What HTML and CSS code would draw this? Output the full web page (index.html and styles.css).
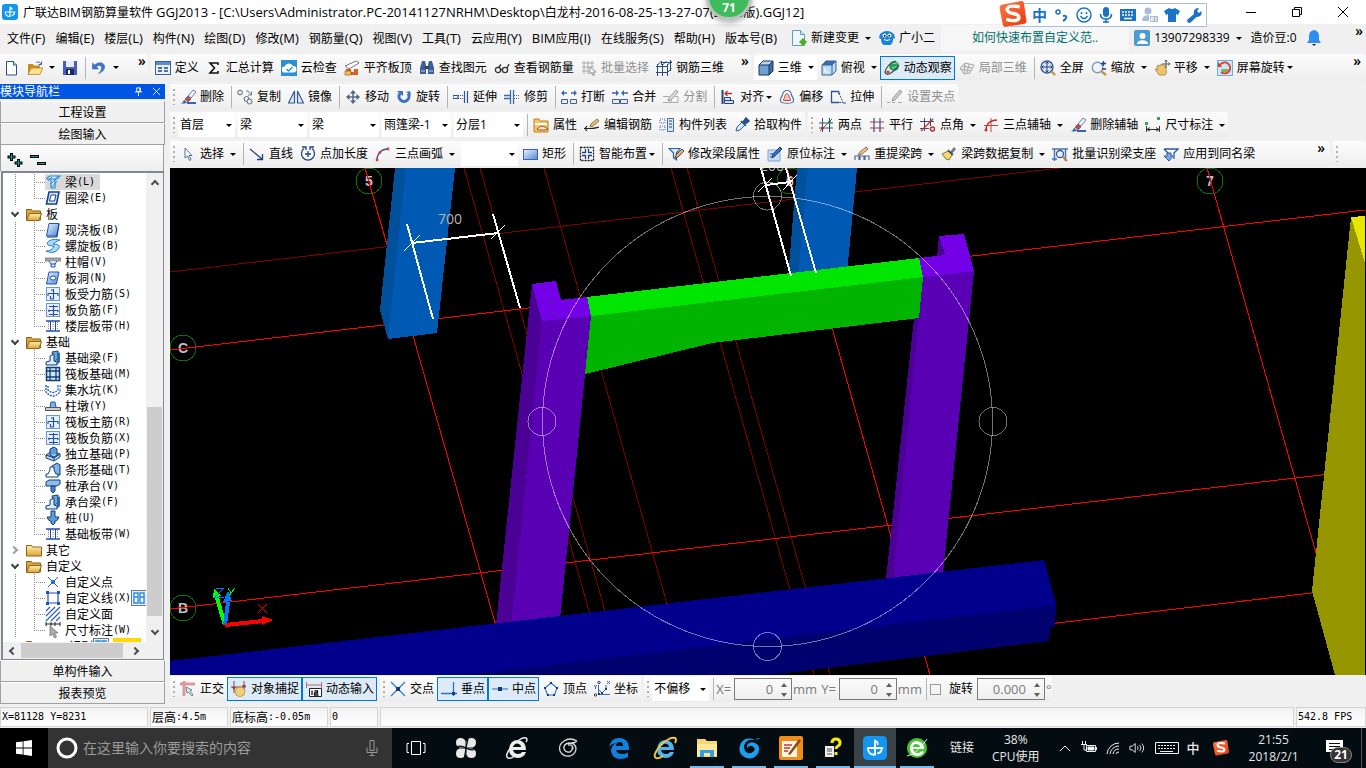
FILE: index.html
```html
<!DOCTYPE html>
<html lang="zh-CN">
<head>
<meta charset="utf-8">
<title>广联达BIM钢筋算量软件 GGJ2013</title>
<link rel="stylesheet" href="styles.css">
</head>
<body>
<svg class="defs" aria-hidden="true">
<defs>
<linearGradient id="gb" x1="0" y1="0" x2="1" y2="1"><stop offset="0" stop-color="#eaf4ff"/><stop offset="1" stop-color="#4f86d8"/></linearGradient>
<linearGradient id="gf" x1="0" y1="0" x2="0" y2="1"><stop offset="0" stop-color="#fff0b0"/><stop offset="1" stop-color="#dfa530"/></linearGradient>
<linearGradient id="gs" x1="0" y1="0" x2="1" y2="1"><stop offset="0" stop-color="#ff7a45"/><stop offset="1" stop-color="#e8380d"/></linearGradient>
</defs>
<symbol id="app" viewBox="0 0 16 16"><rect width="16" height="16" rx="3" fill="#1296f0"/><path d="M8 3v9.500M3.500 8H13M3.300 8q0 4.500 4.700 4.500M12.500 8q0 3-2.500 3.500M8 3.500q2 0 1.800 2" fill="none" stroke="#fff" stroke-width="1.200" stroke-linecap="round"/></symbol>
<symbol id="new" viewBox="0 0 16 16"><path d="M2.500 1.500h7l3 3.500v10h-10z" fill="#fff" stroke="#2f4f86"/><path d="M9.500 1.500V5h3" fill="#dce8f8" stroke="#2f4f86"/></symbol>
<symbol id="open" viewBox="0 0 16 16"><path d="M1 4h5l1 1.500h6V14H1z" fill="#c98e22"/><path d="M4 8h12l-3 6.500H1z" fill="#ffe08a" stroke="#a87820" stroke-width=".7"/><path d="M9 3c2-2 4-1 5 1M14.500 1.500v3h-3" fill="none" stroke="#3a62a8"/></symbol>
<symbol id="save" viewBox="0 0 16 16"><path d="M1 1h14v14H1z" fill="#4a5cc0"/><path d="M4 1h8v6H4z" fill="#e6ecff"/><path d="M4 9h8v6H4z" fill="#20285c"/><path d="M6 10h2v4H6z" fill="#fff"/></symbol>
<symbol id="undo" viewBox="0 0 16 16"><path d="M1.500 3v6h6L5.300 6.800C9 4 11 6 10.500 8.500c-.3 2-1.500 3.500-3 5C12 12 14 9 13.500 6 12.500 2 7.500 1.500 3.700 5z" fill="#3874d8" stroke="#2a57a8" stroke-width=".5"/></symbol>
<symbol id="define" viewBox="0 0 16 16"><rect x=".5" y="1.500" width="15" height="13" fill="#e8f0fc" stroke="#3a5f9f"/><path d="M1 2h14v3H1z" fill="#5f8bd0"/><path d="M3 8h4M3 11h4M9 8h4M9 11h4" stroke="#26437c" stroke-width="1.500"/></symbol>
<symbol id="sigma" viewBox="0 0 16 16"><path d="M12 5V3H4l4.500 5L4 13h8v-2" fill="none" stroke="#111" stroke-width="1.600"/></symbol>
<symbol id="cloud" viewBox="0 0 16 16"><rect width="16" height="16" fill="#2b8fd3"/><path d="M4 12.500a3 3 0 0 1-.3-6A4.500 4.500 0 0 1 12 6a3.200 3.200 0 0 1 .5 6.500z" fill="#fff"/><path d="m5.500 9 2 2 4-4" fill="none" stroke="#2b8fd3" stroke-width="1.400"/></symbol>
<symbol id="level" viewBox="0 0 16 16"><path d="M1 6 12 1l3 2L5 9z" fill="#fff" stroke="#777"/><path d="M2 9h5v3h3v-3h4v6H2z" fill="#d9622b"/><path d="M1 11h6v4H1z" fill="#f3c14c" stroke="#8a4a1a" stroke-width=".6"/></symbol>
<symbol id="find" viewBox="0 0 16 16"><path d="M3 1h3l1 4v9H1V8zM10 1h3l2 7v6H9V5z" fill="#3c5f9c"/><path d="M6 6h4v3H6z" fill="#274272"/><path d="M2 11h4M10 11h4" stroke="#bcd0f0"/></symbol>
<symbol id="glasses" viewBox="0 0 16 16"><g fill="none" stroke="#333" stroke-width="1.300"><circle cx="4" cy="10" r="2.600"/><circle cx="11" cy="10" r="2.600"/><path d="M6.600 9.500h2M4.500 7.500 7 4.500M13 8l2-4"/></g></symbol>
<symbol id="batch" viewBox="0 0 16 16"><path d="M1 3h12M1 7h12M1 11h7M3 1v13M7 1v13M11 1v6" stroke="#a8a8a8"/><path d="m9 7 6 5-3 .3L13.500 15 12 15.500l-1.200-3L9 14z" fill="#fff" stroke="#909090"/></symbol>
<symbol id="bars3d" viewBox="0 0 16 16"><path d="M1.500 4v12M6.500 4v12M11.500 4v12M0 6.500h12M0 12.500h12M14.500 0v11M1.500 5l4-4M6.500 5l4-4M11.500 5l4-4M11.500 12.500l4-4M5 2.500h11M5.500 1v4" fill="none" stroke="#2d4a80"/></symbol>
<symbol id="cube" viewBox="0 0 16 16"><path d="M1 5 5 1h10L11 5z" fill="#b9d5ee"/><path d="M1 5h10v10H1z" fill="#6fa0cf"/><path d="m11 5 4-4v10l-4 4z" fill="#3c6ca4"/><path d="M1 5h10v10H1zM1 5l4-4h10L11 5M15 1v10l-4 4" fill="none" stroke="#17375e"/></symbol>
<symbol id="top" viewBox="0 0 16 16"><path d="M1 5 5 1h10L11 5z" fill="#3b6ea8"/><path d="M1 5h10v10H1zm10 0 4-4v10l-4 4z" fill="#bcdcf4"/><path d="M1 5h10v10H1zM1 5l4-4h10L11 5M15 1v10l-4 4" fill="none" stroke="#3a6494"/><path d="M4 8v4h4" stroke="#fff" fill="none"/></symbol>
<symbol id="orbit" viewBox="0 0 16 16"><circle cx="10" cy="6" r="5" fill="#28a05c"/><path d="M7 4c2-2 4 0 6-1M8 8c2 0 3-2 5-1" stroke="#a5e8bd" fill="none"/><path d="M12 1Q3 4 1 12q1 4 6 1 5-3 8-8" fill="none" stroke="#444" stroke-width="1.200"/><circle cx="4" cy="12" r="1.600" fill="#c23a2a"/></symbol>
<symbol id="local3d" viewBox="0 0 16 16"><path d="m1 8 5-5 9 2-4 8-6 1zM6 3l-1 11M10 4 8 13M3 6l10 2M1 9l11 2" fill="#eee" stroke="#aaa"/></symbol>
<symbol id="full" viewBox="0 0 16 16"><circle cx="7" cy="7" r="6" fill="#dcebff" stroke="#3a5690" stroke-width="1.400"/><path d="M7 2v10M2 7h10M5.500 3.500 7 2l1.500 1.500M5.500 10.500 7 12l1.500-1.500M3.500 5.500 2 7l1.500 1.500M10.500 5.500 12 7l-1.500 1.500" fill="none" stroke="#22407c"/><path d="m11.500 11.500 3.500 3.500" stroke="#c89040" stroke-width="2.400"/></symbol>
<symbol id="zoom" viewBox="0 0 16 16"><circle cx="6.500" cy="7.500" r="5.200" fill="#eef5ff" stroke="#8a96ac" stroke-width="1.400"/><path d="M10.500 11.500 15 15" stroke="#c89040" stroke-width="2.400"/><path d="M12.500 1v5M10 3.500h5M11 9h4" stroke="#22407c" stroke-width="1.300"/></symbol>
<symbol id="pan" viewBox="0 0 16 16"><path d="M1 9l2 1V6l2-1 1 1 1-2 2 1 1 1 2 0v5l1 1-2 3H5z" fill="#edc46a" stroke="#9a7434" stroke-width=".7"/><path d="M12 0v8M8 4h8M10.700 1.500 12 0l1.300 1.500M14.500 2.700 16 4l-1.500 1.300" fill="none" stroke="#555"/></symbol>
<symbol id="spinview" viewBox="0 0 16 16"><rect x=".5" y=".5" width="15" height="15" fill="#c8e8fa" stroke="#6ab0d8"/><path d="M4 9h8l-2 3H5z" fill="#7ab648"/><path d="M3 5a5.500 5.500 0 1 1 1 7" fill="none" stroke="#e03a2f" stroke-width="1.800"/><path d="M1 2v5h4z" fill="#e03a2f"/></symbol>
<symbol id="erase" viewBox="0 0 16 16"><path d="M8 7l5-6 3 2-5 6z" fill="#f2f5fa" stroke="#44618f" stroke-width=".8"/><path d="m5 10 3-3 3 3-3 3z" fill="#c84a48" stroke="#3a4a78" stroke-width=".6"/><path d="M0 14.500q3 0 4-4l3 3-2 1z" fill="#3a64a8"/><path d="M7 14h9" stroke="#3a64a8" stroke-width="2"/></symbol>
<symbol id="copy" viewBox="0 0 16 16"><g fill="#eef1f5" stroke="#5b6470"><circle cx="3" cy="3.500" r="2.400"/><circle cx="9.500" cy="10" r="2.500"/><circle cx="12.500" cy="12.500" r="2.500"/></g><path d="M9 2h2l3 3.500M14.500 2.500V6H11" fill="none" stroke="#6b7a90"/></symbol>
<symbol id="mirror" viewBox="0 0 16 16"><path d="M6.500 2v12h-6zM9.500 2v12h6z" fill="#dfeafa" stroke="#34578f" stroke-width="1.200"/></symbol>
<symbol id="move" viewBox="0 0 16 16"><path d="M8 2v12M2 8h12" stroke="#5a6c86" stroke-width="1.600"/><path d="M8 1 5 4.500h6zM8 15l-3-3.500h6zM1 8l3.500-3v6zM15 8l-3.500-3v6z" fill="#4a6288"/></symbol>
<symbol id="rotate" viewBox="0 0 16 16"><path d="M4 4.500a5 5 0 1 0 8 0" fill="none" stroke="#3b6fc4" stroke-width="3"/><path d="M1 2h6v5zM10 3l4-1 1 4z" fill="#3b6fc4"/></symbol>
<symbol id="extend" viewBox="0 0 16 16"><path d="M14.500 2v12M11.500 2v12M0 6.500h5v3H0z" fill="none" stroke="#2d5792" stroke-width="1.200"/><path d="M5 6.500h6M5 9.500h6" stroke="#2d5792" stroke-dasharray="1 1"/></symbol>
<symbol id="trim" viewBox="0 0 16 16"><path d="M6.500 1v14M9.500 1v14M0 6.500h6M0 9.500h6" fill="none" stroke="#3c6da8" stroke-width="1.300"/><path d="M10 6.500h6M10 9.500h6" stroke="#3c6da8" stroke-dasharray="1 1"/></symbol>
<symbol id="break" viewBox="0 0 16 16"><path d="M1 4h5M10 4h5" stroke="#3a68b4" stroke-width="1.300"/><path d="M0 4l3-3v6zM16 4l-3-3v6z" fill="#3a68b4"/><path d="M.5 10.500h6v4h-6zM9.500 10.500h6v4h-6z" fill="#e4ecf8" stroke="#4a5f80"/></symbol>
<symbol id="merge" viewBox="0 0 16 16"><path d="M0 4h5M11 4h5" stroke="#3a68b4" stroke-width="1.300"/><path d="M7 4 4 1v6zM9 4l3-3v6z" fill="#3a68b4"/><path d="M.5 10.500h7v4h-7zM8.500 10.500h7v4h-7z" fill="#e4ecf8" stroke="#4a5f80"/></symbol>
<symbol id="split" viewBox="0 0 16 16"><path d="M0 7.500h6M0 13.500h15V7.500h-3M8 13V9" fill="none" stroke="#aaa"/><path d="m5 12 1-3 7-8 2 2-7 8z" fill="#ddd" stroke="#999"/></symbol>
<symbol id="align" viewBox="0 0 16 16"><path d="M2.500 1v14" stroke="#26437c" stroke-width="2"/><path d="M5 4.500h7M7.500 2 5 4.500 7.500 7" fill="none" stroke="#c03030" stroke-width="1.300"/><path d="M4.500 8.500h6v3h-6zM4.500 11.500h9v3h-9z" fill="#cfe0f7" stroke="#26437c"/></symbol>
<symbol id="offset" viewBox="0 0 16 16"><path d="M1.500 12C1 9 3 8 3.500 6 4 3 6 1.500 8 1.500s4 1.500 4.500 4.500c.5 2 2.500 3 2 6-.5 3-12.500 3-13 0z" fill="#fff" stroke="#4a6ea6" stroke-width="1.200"/><path d="M4.500 11.500C4.500 9 6 9 6 7c0-3 4-3 4 0 0 2 1.500 2 1.500 4.500z" fill="#f5c8c4" stroke="#cc4238"/></symbol>
<symbol id="stretch" viewBox="0 0 16 16"><path d="M9 2.500H1.500v11H9M9 2.500v3" fill="none" stroke="#2d5792" stroke-width="1.300"/><path d="m9 4 4 9.500H8" fill="none" stroke="#2d5792" stroke-dasharray="2 1"/><path d="M13 14h3" stroke="#2d5792"/></symbol>
<symbol id="grip" viewBox="0 0 16 16"><path d="M0 13.500h3M5 13.500h3M11 13.500h4" stroke="#aaa"/><path d="m5 12 1-3 7-8 2 2-7 8z" fill="#ccc" stroke="#999"/></symbol>
<symbol id="props" viewBox="0 0 16 16"><path d="M1 2h5l1 2h8v11H1z" fill="#f6c466" stroke="#c87f1c"/><path d="M2 6h12v2H2z" fill="#fff"/><path d="m4 12 4-3 4 1 3 2-3 1H5z" fill="#fbe3b8" stroke="#7a4a10" stroke-width=".8"/></symbol>
<symbol id="edit" viewBox="0 0 16 16"><path d="M0 11.500h7c3 0 6-1 8-1.500M3 9l-2 2.500L3 14" fill="none" stroke="#222" stroke-width="1.200"/><path d="m6 10 1-3 6-5 2 2-6 5z" fill="#e8c07a" stroke="#7a5a28" stroke-width=".8"/></symbol>
<symbol id="list" viewBox="0 0 16 16"><path d="M8.500 1.500h6v13h-6z" fill="#dbe8fa" stroke="#456ba8"/><path d="M10 4h3M10 7h3M10 10h3" stroke="#26437c"/><path d="M1 2h5v4H1zM1 9h5v4H1z" fill="none" stroke="#456ba8" stroke-dasharray="1 1"/></symbol>
<symbol id="pick" viewBox="0 0 16 16"><path d="m2 14 1-4 5-5 3 3-5 5z" fill="#d5e8fa" stroke="#345c94"/><path d="m7 4 5 5M9 5l3-4 3 3-4 3z" fill="#28508c" stroke="#28508c" stroke-width="1.500"/></symbol>
<symbol id="twopt" viewBox="0 0 16 16"><path d="M4.500 1v14M11.500 1v14M1 6h14M1 11h14" stroke="#3d4f77"/><path d="m2 14 12-12" stroke="#2b8a3a"/><circle cx="4.500" cy="11" r="1.500" fill="#c22"/><circle cx="11.500" cy="5" r="1.500" fill="#2b8a3a"/></symbol>
<symbol id="parallel" viewBox="0 0 16 16"><path d="M5 1v14M11 1v14" stroke="#2d4f92" stroke-width="1.200"/><path d="M1 5h14M1 11h14" stroke="#b8383a" stroke-width="1.200"/></symbol>
<symbol id="ptangle" viewBox="0 0 16 16"><path d="M4.500 1v13M10.500 1v8M0 4.500h14M0 11.500h9" stroke="#3d4f77"/><path d="M1 14 13 2" stroke="#c22d2d" stroke-width="1.300"/><circle cx="12.500" cy="12" r="2" fill="none" stroke="#c22d2d" stroke-width="1.400"/></symbol>
<symbol id="arcaxis" viewBox="0 0 16 16"><path d="M3 13C3 7 7 3 14 3" fill="none" stroke="#c22d2d" stroke-width="1.300"/><path d="M8 1v14M1 8.500h14" stroke="#c9443c"/><circle cx="3" cy="13" r="1.500" fill="#c22d2d"/></symbol>
<symbol id="dim" viewBox="0 0 16 16"><path d="M1.500 9v6M14.500 9v6M2 12.500h12M5 10.500 2 12.500 5 14M11 10.500l3 2-3 1.500" fill="none" stroke="#333"/><path d="M0 5h3v3H0zM12 0h3v3h-3z" fill="#3fa04a"/></symbol>
<symbol id="cursor" viewBox="0 0 16 16"><path d="M5 2v10l2.500-2 2 4.500 1.500-.8L9 9.500h3z" fill="#fff" stroke="#55709a"/></symbol>
<symbol id="line" viewBox="0 0 16 16"><path d="m1 3 12 10M13.500 8v5.500H8" fill="none" stroke="#24427a" stroke-width="1.300"/></symbol>
<symbol id="ptlen" viewBox="0 0 16 16"><path d="M4 2.500a6.500 6.500 0 1 0 8 0M2 1h4v3M14 1h-4v3M8 5v6M5 8h6" fill="none" stroke="#24427a" stroke-width="1.300"/></symbol>
<symbol id="arc" viewBox="0 0 16 16"><path d="M2 14C2 8 6 3 13 3" fill="none" stroke="#35568c" stroke-width="1.300"/><g fill="#d6402e"><circle cx="2" cy="14" r="1.400"/><circle cx="5" cy="6.500" r="1.400"/><circle cx="13" cy="3" r="1.400"/></g></symbol>
<symbol id="rect" viewBox="0 0 16 16"><rect x="1.500" y="3.500" width="14" height="10" fill="url(#gb)" stroke="#3b62b4"/></symbol>
<symbol id="smart" viewBox="0 0 16 16"><rect x="1.500" y="1.500" width="13" height="13" fill="#fff" stroke="#111" stroke-width="1.300" stroke-dasharray="2 1"/><path d="M6.500 3v3.500H3M9.500 3v3.500H13M6.500 13V9.500H3M9.500 13V9.500H13" fill="none" stroke="#1d3d70" stroke-width="1.300"/></symbol>
<symbol id="segprop" viewBox="0 0 16 16"><path d="M1 2.500h11L8.500 7v7l-3-2V7z" fill="#dceafa" stroke="#2a62a8" stroke-width="1.200"/><path d="m7 12 1-3 6-6 2 2-6 6z" fill="#f0b478" stroke="#4c321c" stroke-width=".9"/></symbol>
<symbol id="situ" viewBox="0 0 16 16"><path d="M1 4h12v11H1z" fill="#c7dbf4" stroke="#7ea4d4"/><path d="M3 8h5M3 11h3" stroke="#28508c"/><path d="m5 12 1-4 7-7 2 2-7 7z" fill="#3c72bd" stroke="#1d4078"/></symbol>
<symbol id="span" viewBox="0 0 16 16"><path d="M1 14v-4h4v4M6 14v-4h4v4M11 14v-4h4v4" fill="none" stroke="#4a6998" stroke-width="1.200"/><path d="m4 9 2-3 6-5 2 2-6 5z" fill="#f0c68a" stroke="#84603a" stroke-width=".9"/></symbol>
<symbol id="brush" viewBox="0 0 16 16"><path d="m9 6 4-5 2 2-4 5z" fill="#6d7b90"/><path d="M1 8l6-3 4 4-3 5-3-1z" fill="#f1da6e" stroke="#6b5a20" stroke-width=".8"/><path d="m7 4 5 5" stroke="#3c4b66" stroke-width="1.600"/></symbol>
<symbol id="recog" viewBox="0 0 16 16"><path d="M0 3h16M2.500 3v12M13.500 3v12M0 13h5" stroke="#4477b4" stroke-width="1.500"/><circle cx="8" cy="8" r="3.500" fill="#e8f3ff" stroke="#35578f" stroke-width="1.300"/><path d="m11 11 4 4" stroke="#b98140" stroke-width="2"/></symbol>
<symbol id="applyto" viewBox="0 0 16 16"><path d="M1 3h14l-4 4v6M1 3l4 4v2" fill="none" stroke="#2a5a9c" stroke-width="1.300"/><path d="M4 7v3H1l5 5 4-5H8V7z" fill="#78a8e4" stroke="#2a5a9c"/></symbol>
<symbol id="ortho" viewBox="0 0 16 16"><path d="M0 3h15M4 0v15" stroke="#d99a9a" stroke-width="3"/><path d="m6 6 6 3-2 1 3 4-1 1-4-4-1 1z" fill="#dfe8f2" stroke="#56687c" stroke-width=".8"/></symbol>
<symbol id="snap" viewBox="0 0 16 16"><path d="M0 6h15M3 0v12M13 0v9" stroke="#844"/><path d="m3 9-2-3h4zM13 7l-2-3h4z" fill="#933"/><path d="m4 10 2-3 3-1 4 1 1 3-1 4-4 2-4-2z" fill="#f0cf78" stroke="#a88438" stroke-width=".7"/></symbol>
<symbol id="dyn" viewBox="0 0 16 16"><path d="M0 4h16M.5 1v6M15.500 1v6" stroke="#b86a6a"/><path d="M3.500 7.500h12v8h-12z" fill="#fff" stroke="#222"/><path d="M6 9.500V14M8.500 10h3v2h-3v2h4" fill="none" stroke="#111" stroke-width="1.300"/></symbol>
<symbol id="cross" viewBox="0 0 16 16"><path d="m1 1 14 14M15 1 1 15" stroke="#2f7bd0" stroke-width="1.300"/><path d="M6 6h4v4H6z" fill="#123a7c"/></symbol>
<symbol id="perp" viewBox="0 0 16 16"><path d="M0 12.500h16M12.500 1v14" stroke="#2f6fc0" stroke-width="1.300"/><path d="M11 11h3v3h-3z" fill="#123a7c"/></symbol>
<symbol id="mid" viewBox="0 0 16 16"><path d="M0 8h16" stroke="#5f96d8" stroke-width="1.500"/><path d="M6 6h4v4H6z" fill="#123a7c"/></symbol>
<symbol id="vertex" viewBox="0 0 16 16"><path d="m8 2 6 5-2.500 7h-7L2 7z" fill="none" stroke="#2f7bd0" stroke-width="1.200"/><g fill="#123a7c"><path d="M7 1h2v2H7zM1 6h2v2H1zM13 6h2v2h-2zM4 13h2v2H4zM10 13h2v2h-2z"/></g></symbol>
<symbol id="coord" viewBox="0 0 16 16"><path d="M4.500 4v9.500H16M4 8l4 4 4-4V4M0 4l1.500 2L3 4M1.500 6v2M13 0l3 3M16 0l-3 3" fill="none" stroke="#2f6fc0"/><circle cx="5" cy="1.500" r="1.200" fill="none" stroke="#333"/><circle cx="1.500" cy="14" r="1.200" fill="none" stroke="#333"/><path d="M4 12h2v2H4zM7 11h2v2H7zM11 7h2v2h-2z" fill="#123a7c"/></symbol>
<symbol id="change" viewBox="0 0 16 16"><path d="M1.500.5h8l4 4v11h-12z" fill="#eef8fd" stroke="#5c9ec0"/><path d="M9.500.5v4h4" fill="#cfe8f4" stroke="#5c9ec0"/><path d="m12 8 4 4-4 4-4-4z" fill="#4caf28"/></symbol>
<symbol id="mascot" viewBox="0 0 16 16"><path d="M1 4l3-2q4-2 8 0l3 2 1 4-2 1q0 5-3 6H5q-3-1-3-6L0 8z" fill="#1c82d8"/><circle cx="5.500" cy="5.500" r="2" fill="#fff"/><circle cx="10.500" cy="5.500" r="2" fill="#fff"/><circle cx="5.700" cy="5.700" r="1" fill="#123"/><circle cx="10.300" cy="5.700" r="1" fill="#123"/><path d="M5 9.500q3 2 6 0" fill="none" stroke="#fff"/></symbol>
<symbol id="user" viewBox="0 0 16 16"><rect width="16" height="16" rx="2" fill="#4a9cd0"/><circle cx="8.500" cy="6" r="3" fill="#fff"/><path d="M3 14c0-5 11-5 11 0z" fill="#fff"/></symbol>
<symbol id="bell" viewBox="0 0 16 16"><path d="M8 0q5 1 5 6v4l2 3H1l2-3V6q0-5 5-6z" fill="#2f8cf0"/><path d="M6 14h4l-2 2z" fill="#222"/></symbol>
<symbol id="folder" viewBox="0 0 16 16"><path d="M.5 3.500h5l1 1.500h8v9h-14z" fill="#d9a53a" stroke="#8a651c"/><path d="M3.500 7.500h12l-2.500 7H.5z" fill="url(#gf)" stroke="#8a651c"/></symbol>
<symbol id="folderc" viewBox="0 0 16 16"><path d="M.5 3.500h5l1 1.500h9v9H.5z" fill="url(#gf)" stroke="#8a651c"/></symbol>
<symbol id="beam" viewBox="0 0 16 16"><path d="M2 4l3-2h10l-3 3H2zM6 5v9h4V5" fill="#d4edff" stroke="#2a8ad8" stroke-width="1.200"/><path d="M3 7l4-4M6 10l7-8M7 13l5-6" stroke="#2a8ad8"/></symbol>
<symbol id="ring" viewBox="0 0 16 16"><path d="M4 2h10l-2.500 12h-10z" fill="#d9eafc" stroke="#123f94" stroke-width="1.600"/><path d="M6 5h5l-1.500 6h-5z" fill="#fff" stroke="#123f94"/></symbol>
<symbol id="slab" viewBox="0 0 16 16"><path d="M4 1.500h10L11.500 14h-10z" fill="url(#gb)" stroke="#1e55b4"/><path d="m14 2-2 13H2" fill="none" stroke="#123f94"/></symbol>
<symbol id="spiral" viewBox="0 0 16 16"><path d="M15 2Q5 0 2 5q0 3 7 3-2 5-8 5 9 4 13-3 2-4-6-4 2-2 7-4z" fill="#a6dbf8" stroke="#2a7ec4"/></symbol>
<symbol id="cap" viewBox="0 0 16 16"><path d="M0 4h16v3H0z" fill="#aaa" stroke="#555" stroke-width=".6"/><path d="m4 7 2 3h4l2-3M6 10v3h4v-3" fill="#d9eafc" stroke="#1e55b4"/></symbol>
<symbol id="hole" viewBox="0 0 16 16"><path d="M4 2h10l-2.500 12h-10z" fill="url(#gb)" stroke="#1e55b4"/><ellipse cx="8" cy="8" rx="3" ry="2" fill="#fff" stroke="#1e55b4"/></symbol>
<symbol id="rebar" viewBox="0 0 16 16"><rect x="1.500" y="1.500" width="13" height="13" fill="#e4efff" stroke="#6a96e0"/><path d="M3 7.500h10V10M8.500 3v10H5.500V10M3 7.500V10M8.500 4H6" fill="none" stroke="#1e4eb0" stroke-width="1.100"/></symbol>
<symbol id="neg" viewBox="0 0 16 16"><rect x="1.500" y="1.500" width="13" height="13" fill="#e4efff" stroke="#6a96e0"/><path d="M3 8.500h10M8.500 3v11M4 4.500h9M4 12.500h9M4 8v2M13 8v2" fill="none" stroke="#1e4eb0" stroke-width="1.100"/></symbol>
<symbol id="strip" viewBox="0 0 16 16"><path d="M1 3h14M1 13h14" stroke="#1e4eb0" stroke-width="1.500"/><path d="M5.500 3v10M10.500 3v10" stroke="#1e4eb0"/><path d="M3.500 4v8M8 4v8M12.500 4v8" stroke="#888" stroke-dasharray="1 1"/></symbol>
<symbol id="fbeam" viewBox="0 0 16 16"><path d="M7 2l6-1v7l-4 5z" fill="#6fa3dc" stroke="#123f74"/><path d="M1 15v-3l4-1V6l4-2v7l3 1v3z" fill="#dceafa" stroke="#123f74"/><path d="m12 2 3 1v9l-3 3z" fill="#2d6ab0"/></symbol>
<symbol id="raft" viewBox="0 0 16 16"><rect x="1.500" y="1.500" width="13" height="13" fill="#cfe4fa" stroke="#123f74" stroke-width="1.500"/><path d="M5 2v12M11 2v12M2 5h12M2 11h12" stroke="#123f74" stroke-width="1.300"/></symbol>
<symbol id="pit" viewBox="0 0 16 16"><path d="M0 4h3v4q5 5 10 0V4h3M1 6v4q7 8 14 0V6" fill="none" stroke="#1e55b4" stroke-dasharray="2 1" stroke-width="1.300"/></symbol>
<symbol id="pier" viewBox="0 0 16 16"><path d="M5 9l1-5h4l1 5" fill="#7fb0ea" stroke="#1e55b4"/><path d="M.5 9.500h15v3H.5z" fill="#ccc" stroke="#555"/></symbol>
<symbol id="indep" viewBox="0 0 16 16"><path d="m1 9 6-4 8 3v3l-6 4-8-3z" fill="#bcd8f4" stroke="#123f74"/><path d="m5 3 4-2 3 2v6L9 11 5 9zM1 9l8 3 6-4M9 12v3" fill="#5f9bd8" stroke="#123f74"/></symbol>
<symbol id="stripf" viewBox="0 0 16 16"><path d="m7 4 5-3 3 2v10H9z" fill="#7fb3e6" stroke="#123f74"/><path d="M1 15v-3h2l2-4V5h4v3l2 4h2v3z" fill="#fff" stroke="#123f74"/></symbol>
<symbol id="pcap" viewBox="0 0 16 16"><path d="m1 4 3-2h11v4l-3 2H1z" fill="#8bbcec" stroke="#123f74"/><path d="M6 8v5l2 2 2-2V8z" fill="#4b86c8" stroke="#123f74"/></symbol>
<symbol id="pile" viewBox="0 0 16 16"><path d="M6 1h4v6h4q-1 4-4 4v2l-2 2-2-2v-2q-3 0-4-4h4z" fill="#5f9bd8" stroke="#123f74"/></symbol>
<symbol id="upoint" viewBox="0 0 16 16"><path d="m3 3 10 10M13 3 3 13" stroke="#2a5cb4"/><path d="M6 6h4v4H6z" fill="#2a6cd8"/></symbol>
<symbol id="uline" viewBox="0 0 16 16"><path d="M3 3h10v10H3z" fill="#fff" stroke="#1e55b4" stroke-width="1.200"/><path d="M1 1h3v3H1zM12 1h3v3h-3zM1 12h3v3H1zM12 12h3v3h-3z" fill="#1e55b4"/></symbol>
<symbol id="uface" viewBox="0 0 16 16"><path d="M1 5l4-4M1 10l9-9M1 15 15 1M6 15l9-9M11 15l4-4" stroke="#2a5cd0" stroke-width="1.200"/></symbol>
<symbol id="udim" viewBox="0 0 16 16"><path d="M1 0v4M15 0v4M6 0v4M10 0v4M1 2h14" stroke="#222"/><path d="M5 4v10l2.500-2 2 4 2-1-2-4H13z" fill="#aaa" stroke="#888"/></symbol>
<symbol id="tag" viewBox="0 0 16 16"><rect x=".5" y=".5" width="15" height="15" fill="#d9eeff" stroke="#777"/><path d="M3 3h4v10H3zM9 3h4v10H9zM3 7h4M9 7h4" fill="#fff" stroke="#2a8ae0" stroke-width="1.400"/></symbol>
<symbol id="sogou" viewBox="0 0 28 28"><path d="M2 4 23 0q2 0 2.300 2L28 21q0 2-2 2.600L6 27q-2 0-2.500-2L0 7q0-2 2-3z" fill="url(#gs)"/><path d="M21 6q-12-2-13 2-.5 4 6 5 7 1 6 5-2 4-13 1" fill="none" stroke="#fff" stroke-width="3.600"/></symbol>
</svg>

<header class="title">
  <svg class="i"><use href="#app"/></svg>
  <h1>广联达BIM钢筋算量软件 <span>GGJ2013 - [C:\Users\Administrator.PC-20141127NRHM\Desktop\</span>白龙村<span>-2016-08-25-13-27-07(2016</span>版<span>).GGJ12]</span></h1>
  <div class="winbtns">
    <button aria-label="最小化"><svg viewBox="0 0 12 12"><path d="M1 6.500h10"/></svg></button>
    <button aria-label="还原"><svg viewBox="0 0 12 12"><path d="M1.500 3.500h7v7h-7zM3.500 3V1.500h7v7H9"/></svg></button>
    <button aria-label="关闭"><svg viewBox="0 0 12 12"><path d="m1 1 10 10M11 1 1 11"/></svg></button>
  </div>
  <div class="badge">71</div>
  <div class="ime">
    <svg class="logo"><use href="#sogou"/></svg>
    <b>中</b>
    <svg viewBox="0 0 16 16"><circle cx="4" cy="5" r="2" fill="none" stroke="#1b73c8" stroke-width="1.500"/><path d="M9 9q4-1 3 2-1 2-3 3" fill="none" stroke="#1b73c8" stroke-width="2"/></svg>
    <svg viewBox="0 0 16 16" class="ln"><circle cx="8" cy="8" r="7"/><path d="M4.500 9q3.500 5 7 0M5.500 5v2M10.500 5v2"/></svg>
    <svg viewBox="0 0 16 16"><rect x="5" y="0" width="6" height="10" rx="3" fill="#1b73c8"/><path d="M2.500 7q0 5 5.500 5t5.500-5M8 12v4M5 15h6" fill="none" stroke="#1b73c8" stroke-width="1.600"/></svg>
    <svg viewBox="0 0 16 16"><path d="M0 2h16v12H0z" fill="#1b73c8"/><path d="M2 5h12M2 8h12" stroke="#fff" stroke-width="1.500" stroke-dasharray="2 1"/><path d="M4 11.500h8" stroke="#fff" stroke-width="1.500"/></svg>
    <svg viewBox="0 0 16 16"><g fill="#a9bdd6"><circle cx="6" cy="4" r="3.500"/><path d="M0 14q0-6 7-6v6zM8 9h8v6H8z"/></g><path d="M9 10.500h2.500v1.500H9v1.500h2.500M14 10v4" stroke="#fff" fill="none"/></svg>
    <svg viewBox="0 0 16 16"><path d="m0 4 5-3q3 2 6 0l5 3-2 4-2-1v8H4V7L2 8z" fill="#1b73c8"/></svg>
    <svg viewBox="0 0 16 16"><path d="m1 13 7-6q-1-5 4-6l1 .500-2 2.500 2 2 2.500-2q1 6-5 6l-6.500 6q-3 0-3-3z" fill="#1b73c8"/></svg>
  </div>
</header>

<nav class="menu">
  <button>文件<span>(F)</span></button><button>编辑<span>(E)</span></button><button>楼层<span>(L)</span></button><button>构件<span>(N)</span></button><button>绘图<span>(D)</span></button><button>修改<span>(M)</span></button><button>钢筋量<span>(Q)</span></button><button>视图<span>(V)</span></button><button>工具<span>(T)</span></button><button>云应用<span>(Y)</span></button><button><span>BIM</span>应用<span>(I)</span></button><button>在线服务<span>(S)</span></button><button>帮助<span>(H)</span></button><button>版本号<span>(B)</span></button>
  <button class="t change"><svg class="i"><use href="#change"/></svg>新建变更<i class="dd"></i></button>
  <button class="t"><svg class="i"><use href="#mascot"/></svg>广小二</button>
  <a class="tip" href="#">如何快速布置自定义范..</a>
  <button class="t"><svg class="i"><use href="#user"/></svg>13907298339<i class="dd"></i></button>
  <button class="bean">造价豆:0</button>
  <button class="t" aria-label="通知"><svg class="i"><use href="#bell"/></svg></button>
  <button class="more end">»</button>
</nav>

<div class="strip">
  <div class="bar">
    <button class="t" aria-label="新建"><svg class="i"><use href="#new"/></svg></button>
    <button class="t" aria-label="打开"><svg class="i"><use href="#open"/></svg><i class="dd"></i></button>
    <button class="t" aria-label="保存"><svg class="i"><use href="#save"/></svg></button>
    <i class="sep"></i>
    <button class="t" aria-label="撤销"><svg class="i"><use href="#undo"/></svg><i class="dd"></i></button>
    <button class="more far">»</button>
  </div>
  <div class="bar">
    <button class="t"><svg class="i"><use href="#define"/></svg>定义</button>
    <button class="t"><svg class="i"><use href="#sigma"/></svg>汇总计算</button>
    <button class="t"><svg class="i"><use href="#cloud"/></svg>云检查</button>
    <button class="t"><svg class="i"><use href="#level"/></svg>平齐板顶</button>
    <button class="t"><svg class="i"><use href="#find"/></svg>查找图元</button>
    <button class="t"><svg class="i"><use href="#glasses"/></svg>查看钢筋量</button>
    <button class="t" disabled><svg class="i"><use href="#batch"/></svg>批量选择</button>
    <button class="t"><svg class="i"><use href="#bars3d"/></svg>钢筋三维</button>
    <button class="more">»</button>
  </div>
  <div class="bar grow">
    <button class="t white"><svg class="i"><use href="#cube"/></svg>三维<i class="dd"></i></button>
    <button class="t"><svg class="i"><use href="#top"/></svg>俯视<i class="dd"></i></button>
    <button class="t on"><svg class="i"><use href="#orbit"/></svg>动态观察</button>
    <button class="t" disabled><svg class="i"><use href="#local3d"/></svg>局部三维</button>
    <i class="sep"></i>
    <button class="t"><svg class="i"><use href="#full"/></svg>全屏</button>
    <button class="t"><svg class="i"><use href="#zoom"/></svg>缩放<i class="dd"></i></button>
    <button class="t"><svg class="i"><use href="#pan"/></svg>平移<i class="dd"></i></button>
    <button class="t"><svg class="i"><use href="#spinview"/></svg>屏幕旋转<i class="dd near"></i></button>
    <button class="more end">»</button>
  </div>
</div>

<main class="work">
  <aside class="side">
    <h2>模块导航栏<span><svg viewBox="0 0 10 10"><path d="M3 1h4v4H3zM1 5.500h8M5 6v4M6.500 1v4"/></svg><svg viewBox="0 0 10 10"><path d="m1 1 8 8M9 1 1 9"/></svg></span></h2>
    <button class="tab">工程设置</button>
    <button class="tab">绘图输入</button>
    <div class="fold">
      <button aria-label="全部展开"><svg viewBox="0 0 16 16"><path d="M4.500 1v8M.5 5h8M11.500 7v8M7.500 11h8" class="k"/><path d="M4.500 2v6M1.500 5h6M11.500 8v6M8.500 11h6"/></svg></button>
      <button aria-label="全部折叠"><svg viewBox="0 0 16 16"><path d="M0 4.500h9M7 11.500h9" class="k"/><path d="M1 4.500h7M8 11.500h7"/></svg></button>
    </div>
    <div class="treebox">
      <ul class="tree">
        <li class="c sel"><span><svg class="i"><use href="#beam"/></svg>梁<b>(L)</b></span></li>
        <li class="c last"><svg class="i"><use href="#ring"/></svg>圈梁<b>(E)</b></li>
        <li class="p"><i class="ex"></i><svg class="i"><use href="#folder"/></svg>板</li>
        <li class="c"><svg class="i"><use href="#slab"/></svg>现浇板<b>(B)</b></li>
        <li class="c"><svg class="i"><use href="#spiral"/></svg>螺旋板<b>(B)</b></li>
        <li class="c"><svg class="i"><use href="#cap"/></svg>柱帽<b>(V)</b></li>
        <li class="c"><svg class="i"><use href="#hole"/></svg>板洞<b>(N)</b></li>
        <li class="c"><svg class="i"><use href="#rebar"/></svg>板受力筋<b>(S)</b></li>
        <li class="c"><svg class="i"><use href="#neg"/></svg>板负筋<b>(F)</b></li>
        <li class="c last"><svg class="i"><use href="#strip"/></svg>楼层板带<b>(H)</b></li>
        <li class="p"><i class="ex"></i><svg class="i"><use href="#folder"/></svg>基础</li>
        <li class="c"><svg class="i"><use href="#fbeam"/></svg>基础梁<b>(F)</b></li>
        <li class="c"><svg class="i"><use href="#raft"/></svg>筏板基础<b>(M)</b></li>
        <li class="c"><svg class="i"><use href="#pit"/></svg>集水坑<b>(K)</b></li>
        <li class="c"><svg class="i"><use href="#pier"/></svg>柱墩<b>(Y)</b></li>
        <li class="c"><svg class="i"><use href="#rebar"/></svg>筏板主筋<b>(R)</b></li>
        <li class="c"><svg class="i"><use href="#neg"/></svg>筏板负筋<b>(X)</b></li>
        <li class="c"><svg class="i"><use href="#indep"/></svg>独立基础<b>(P)</b></li>
        <li class="c"><svg class="i"><use href="#stripf"/></svg>条形基础<b>(T)</b></li>
        <li class="c"><svg class="i"><use href="#pcap"/></svg>桩承台<b>(V)</b></li>
        <li class="c"><svg class="i"><use href="#fbeam"/></svg>承台梁<b>(F)</b></li>
        <li class="c"><svg class="i"><use href="#pile"/></svg>桩<b>(U)</b></li>
        <li class="c last"><svg class="i"><use href="#strip"/></svg>基础板带<b>(W)</b></li>
        <li class="p"><i class="ex shut"></i><svg class="i"><use href="#folderc"/></svg>其它</li>
        <li class="p"><i class="ex"></i><svg class="i"><use href="#folder"/></svg>自定义</li>
        <li class="c"><svg class="i"><use href="#upoint"/></svg>自定义点</li>
        <li class="c"><svg class="i"><use href="#uline"/></svg>自定义线<b>(X)</b><svg class="i"><use href="#tag"/></svg></li>
        <li class="c"><svg class="i"><use href="#uface"/></svg>自定义面</li>
        <li class="c last"><svg class="i"><use href="#udim"/></svg>尺寸标注<b>(W)</b></li>
        <li class="p"><i class="ex"></i><svg class="i"><use href="#folder"/></svg>CAD识别<svg class="i"><use href="#tag"/></svg><mark>NEW</mark></li>
      </ul>
      <div class="vs"><i class="up"></i><span></span><i class="down"></i></div>
      <div class="hs"><i class="left"></i><span></span><i class="right"></i></div>
    </div>
    <button class="tab">单构件输入</button>
    <button class="tab">报表预览</button>
  </aside>

  <section class="stage">
    <div class="row">
      <div class="bar g">
        <button class="t"><svg class="i"><use href="#erase"/></svg>删除</button><i class="sep"></i>
        <button class="t"><svg class="i"><use href="#copy"/></svg>复制</button>
        <button class="t"><svg class="i"><use href="#mirror"/></svg>镜像</button><i class="sep"></i>
        <button class="t"><svg class="i"><use href="#move"/></svg>移动</button>
        <button class="t"><svg class="i"><use href="#rotate"/></svg>旋转</button><i class="sep"></i>
        <button class="t"><svg class="i"><use href="#extend"/></svg>延伸</button>
        <button class="t"><svg class="i"><use href="#trim"/></svg>修剪</button><i class="sep"></i>
        <button class="t"><svg class="i"><use href="#break"/></svg>打断</button>
        <button class="t"><svg class="i"><use href="#merge"/></svg>合并</button>
        <button class="t" disabled><svg class="i"><use href="#split"/></svg>分割</button><i class="sep"></i>
        <button class="t"><svg class="i"><use href="#align"/></svg>对齐<i class="dd near"></i></button>
        <button class="t"><svg class="i"><use href="#offset"/></svg>偏移</button>
        <button class="t"><svg class="i"><use href="#stretch"/></svg>拉伸</button><i class="sep"></i>
        <button class="t" disabled><svg class="i"><use href="#grip"/></svg>设置夹点</button>
      </div>
    </div>
    <div class="row">
      <div class="bar g">
        <label class="cb s"><select aria-label="楼层"><option>首层</option></select></label>
        <label class="cb"><select aria-label="构件类别"><option>梁</option></select></label>
        <label class="cb"><select aria-label="构件类型"><option>梁</option></select></label>
        <label class="cb"><select aria-label="构件"><option>雨篷梁-1</option></select></label>
        <label class="cb"><select aria-label="分层"><option>分层1</option></select></label>
        <i class="sep"></i>
        <button class="t"><svg class="i"><use href="#props"/></svg>属性</button>
        <button class="t"><svg class="i"><use href="#edit"/></svg>编辑钢筋</button>
        <button class="t"><svg class="i"><use href="#list"/></svg>构件列表</button>
        <button class="t"><svg class="i"><use href="#pick"/></svg>拾取构件</button>
      </div>
      <div class="bar g">
        <button class="t"><svg class="i"><use href="#twopt"/></svg>两点</button>
        <button class="t"><svg class="i"><use href="#parallel"/></svg>平行</button>
        <button class="t"><svg class="i"><use href="#ptangle"/></svg>点角<i class="dd"></i></button>
        <button class="t"><svg class="i"><use href="#arcaxis"/></svg>三点辅轴<i class="dd"></i></button>
        <button class="t"><svg class="i"><use href="#erase"/></svg>删除辅轴</button>
        <button class="t"><svg class="i"><use href="#dim"/></svg>尺寸标注<i class="dd"></i></button>
      </div>
    </div>
    <div class="row low">
      <div class="bar g grow">
        <button class="t"><svg class="i"><use href="#cursor"/></svg>选择<i class="dd"></i></button><i class="sep"></i>
        <button class="t"><svg class="i"><use href="#line"/></svg>直线</button>
        <button class="t"><svg class="i"><use href="#ptlen"/></svg>点加长度</button>
        <button class="t"><svg class="i"><use href="#arc"/></svg>三点画弧<i class="dd"></i></button>
        <label class="cb s"><select aria-label="绘制参数"><option></option></select></label>
        <button class="t"><svg class="i"><use href="#rect"/></svg>矩形</button><i class="sep"></i>
        <button class="t"><svg class="i"><use href="#smart"/></svg>智能布置<i class="dd near"></i></button><i class="sep"></i>
        <button class="t"><svg class="i"><use href="#segprop"/></svg>修改梁段属性</button>
        <button class="t"><svg class="i"><use href="#situ"/></svg>原位标注<i class="dd"></i></button>
        <button class="t"><svg class="i"><use href="#span"/></svg>重提梁跨<i class="dd"></i></button>
        <button class="t"><svg class="i"><use href="#brush"/></svg>梁跨数据复制<i class="dd"></i></button>
        <button class="t"><svg class="i"><use href="#recog"/></svg>批量识别梁支座</button>
        <button class="t"><svg class="i"><use href="#applyto"/></svg>应用到同名梁</button>
        <button class="more end">»</button>
      </div>
      <div class="bar g stub"></div>
    </div>

    <svg class="view" viewBox="170 168 1196 507" preserveAspectRatio="xMinYMin slice" role="img" aria-label="三维视图">
      <g shape-rendering="crispEdges">
        <g class="num"><text x="369" y="186">5</text><text x="1210" y="186">7</text><text x="183" y="353">C</text><text x="183" y="613">B</text><text x="790" y="186">6</text></g>
        <g fill="none" stroke="#007800"><circle cx="369" cy="181" r="13"/><circle cx="1210" cy="181" r="13"/><circle cx="183" cy="348" r="13"/><circle cx="183" cy="608" r="13"/><circle cx="790" cy="181" r="13"/></g>
        <path d="M170 272 1060 168M464 168 607 675M480 168 623 675M544 168 687 675M671 168 814 675M687 168 830 675" stroke="#7d0000"/>
        <path d="M365 168 510 675M170 350 1365 210M170 609 1330 474M1040 625 1320 592M1207 168 1320 567M787 168 930 675" stroke="#f00"/>
        <path d="M395 168h11l-18 171-8-29z" fill="#00509b"/><path d="M406 168h49l-18 165-49 6z" fill="#005ab4"/>
        <path d="M797 168h11l-9 112-11-1z" fill="#00509b"/><path d="M808 168h49l-10 105-49 5z" fill="#005ab4"/>
        <path d="M914 318h6l-27 260-7 1z" fill="#4b0096"/><path d="M923 277 974 271 943 573 893 579z" fill="#5a00b4"/>
        <path d="M939 236 945 256 937 258z" fill="#4b0096"/><path d="M939 236 964 234 974 271 923 277 919 258 945 255z" fill="#7300e6"/>
        <path d="M532 284 542 321 511 624 496 625z" fill="#4b0096"/><path d="M542 321 591 316 560 619 511 625z" fill="#5a00b4"/>
        <path d="M532 284 556 281 561 300 587 297 591 316 542 321z" fill="#7300e6"/>
        <path d="M587 297 919 258 923 277 591 316z" fill="#00e600"/><path d="M591 316 923 277 919 318 712 343 585 374z" fill="#00b400"/>
        <path d="M170 661 1044 560 1056 605 465 675H170z" fill="#00008c"/><path d="M1056 605 465 675H770L1049 641 1050 627H1055z" fill="#00006e"/>
        <path d="M1351 217 1365 216V265z" fill="#e6e600"/><path d="M1351 217 1365 263V675H1335L1312 591z" fill="#969600"/>
        <path d="M550 302v2M552 312v2M553 328v1M552 338v1M551 349v1" stroke="#007800"/>
        <path d="M407 224 433 319M412 243 498 233M493 214 520 308M761 168 791 276M786 168 816 273M766 185 790 182" stroke="#fff" stroke-width="2"/>
        <path d="M404 251 420 235M491 239 505 225M758 192 772 178M783 190 797 175" stroke="#fff"/>
        <g fill="none" stroke="#fff" stroke-opacity=".45"><circle cx="767.500" cy="421.500" r="225"/><circle cx="767.500" cy="196" r="14"/><circle cx="767.500" cy="646.500" r="14"/><circle cx="542" cy="421.500" r="14"/><circle cx="993" cy="421.500" r="14"/></g>
        <path d="M225 625 217 598" stroke="#0f0" stroke-width="4"/><path d="M213 598 214 588 221 596z" fill="#0f0"/><path d="M228 588l3 5 4-5M231 593l-2 3" stroke="#0f0" fill="none"/>
        <path d="M225 625 228 602" stroke="#0078ff" stroke-width="4"/><path d="M223 602 228 591 232 601z" fill="#0078ff"/><path d="M216 588h8l-9 9h9" stroke="#0078ff" fill="none"/>
        <path d="M225 625 263 621" stroke="#f00" stroke-width="4"/><path d="M262 616 273 620 262 625z" fill="#f00"/><path d="m258 604 9 9M267 604l-9 9" stroke="#e00"/>
      </g>
      <text class="dimt" x="438" y="224">700</text><text class="dimt" x="760" y="171">200</text>
    </svg>

    <div class="row foot">
      <div class="bar g">
        <button class="t"><svg class="i"><use href="#ortho"/></svg>正交</button>
        <button class="t on"><svg class="i"><use href="#snap"/></svg>对象捕捉</button>
        <button class="t on"><svg class="i"><use href="#dyn"/></svg>动态输入</button>
      </div>
      <div class="bar g">
        <button class="t"><svg class="i"><use href="#cross"/></svg>交点</button>
        <button class="t on"><svg class="i"><use href="#perp"/></svg>垂点</button>
        <button class="t on"><svg class="i"><use href="#mid"/></svg>中点</button>
        <button class="t"><svg class="i"><use href="#vertex"/></svg>顶点</button>
        <button class="t"><svg class="i"><use href="#coord"/></svg>坐标</button>
      </div>
      <div class="bar g off">
        <label class="cb s"><select aria-label="偏移方式"><option>不偏移</option></select></label>
        <i class="sep"></i>
        <label for="ox">X=</label><span class="spin"><input id="ox" value="0"><i class="u"></i><i class="d"></i></span><span>mm</span>
        <label for="oy" class="y">Y=</label><span class="spin"><input id="oy" value="0"><i class="u"></i><i class="d"></i></span><span>mm</span>
        <i class="sep"></i>
        <input type="checkbox" id="rot"><label for="rot" class="rot">旋转</label><span class="spin w"><input aria-label="旋转角度" value="0.000"><i class="u"></i><i class="d"></i></span><span>°</span>
      </div>
    </div>
  </section>
</main>

<footer class="status">
  <span class="c1"><b>X=81128 Y=8231</b></span><span class="c2">层高<b>:4.5m</b></span><span class="c3">底标高<b>:-0.05m</b></span><span class="c4"><b>0</b></span><span class="c5"></span><span class="c6"><b>542.8 FPS</b></span>
</footer>

<nav class="task">
  <button class="start" aria-label="开始"><svg viewBox="0 0 16 16"><path d="M0 2.300 6.700 1.400v6.200H0zM7.500 1.300 16 0v7.600H7.500zM0 8.400h6.700v6.200L0 13.700zM7.500 8.400H16V16l-8.500-1.300z" fill="#fff"/></svg></button>
  <label class="search"><svg viewBox="0 0 22 22"><circle cx="11" cy="11" r="9" fill="none" stroke="#fff" stroke-width="3"/></svg><input placeholder="在这里输入你要搜索的内容" aria-label="搜索"><svg class="mic" viewBox="0 0 12 16"><path d="M4 .500h4v10H4zM1 7.500v5h10v-5M6 12.500v3M3.500 15.500h5" fill="none" stroke="#999"/></svg></label>
  <div class="apps">
    <button aria-label="任务视图"><svg viewBox="0 0 24 24"><path d="M7.500 5.500h9v13h-9zM5 7.500H3v9h2M19 7.500h2v9h-2" fill="none" stroke="#fff"/></svg></button>
  </div>
  <div class="apps wide">
    <button aria-label="风扇"><svg viewBox="0 0 24 24"><g fill="#e8e8e8"><path id="blade" d="M11.500 11.500H6.500Q2 11 2 6.500 2 2 6.500 2q4 0 5 3.500z"/><use href="#blade" transform="rotate(90 12 12)"/><use href="#blade" transform="rotate(180 12 12)"/><use href="#blade" transform="rotate(270 12 12)"/></g><path d="M3 10.500q5-1 9 1.500M14 3q-1 5-2 9M21 13.500q-5 1-9-1.500M10.500 21q1-5 1.500-9" fill="none" stroke="#030c10" stroke-width="1.200"/></svg></button>
    <button aria-label="浏览器"><svg viewBox="0 0 24 24"><path d="M21 14H8q1 4 5 4 3 0 4-2h4q-2 6-9 6-8-1-8-9 1-9 9-9 8 1 8 10zM8 11h8q0-3-4-3.500T8 11z" fill="#eee"/><path d="M3 22Q-1 20 7 10 17 0 21 2q2 1 0 4M3 22q3 1 7-2" fill="none" stroke="#eee" stroke-width="1.500"/></svg></button>
    <button aria-label="旋涡"><svg viewBox="0 0 24 24"><path d="M21 5Q14 1 8 5q-6 4-4 10 3 6 10 5 6-2 6-8-1-5-7-5-6 1-5 6 2 4 6 3 3-2 2-5M21 5q-2 2-5 2M12 9q5-1 5 4" fill="none" stroke="#ddd" stroke-width="1.300"/></svg></button>
    <button aria-label="Edge"><svg viewBox="0 0 24 24"><path d="M2 11Q4 2 12 2q9 0 10 9v3H9q1 4 6 4 3 0 6-1.500V21q-3 2-8 2-8-1-9-8 0-5 5-8Q4 8 2 11zM9 10h7q0-4-3-4-4 0-4 4z" fill="#1080dd"/></svg></button>
  </div>
  <div class="apps mid">
    <button aria-label="Internet Explorer"><svg viewBox="0 0 24 24"><path d="M21 14H8q1 4 5 4 3 0 4-2h4q-2 6-9 6-8-1-8-9 1-9 9-9 8 1 8 10zM8 11h8q0-3-4-3.500T8 11z" fill="#4fb4ee"/><path d="M3 22Q-1 20 7 10 17 0 22 2q2 1 0 5M3 22q3 1 7-2" fill="none" stroke="#f0c43c" stroke-width="2"/></svg></button>
    <button class="run" aria-label="文件资源管理器"><svg viewBox="0 0 24 24"><path d="M2 3h8l2 2h10v16H2z" fill="#f5d576"/><path d="M2 8h20v12H2z" fill="#fde79a"/><path d="M5 21v-7h14v7h-4v-4H9v4z" fill="#2fa0e0"/></svg></button>
    <button class="run" aria-label="广联达"><svg viewBox="0 0 24 24"><path d="M23 2q-3 0-5 2Q9 0 4 7q-4 8 2 13 7 5 13 0 5-5 2-11-4-4-9-2-3 2-2 5 2-3 5-2 4 2 2 5-4 4-8 1-4-5 0-10 3-3 7-2 6 0 8-3z" fill="#1aa0ee"/></svg></button>
    <button class="run" aria-label="记事"><svg viewBox="0 0 24 24"><rect width="24" height="24" rx="2" fill="#f08c1a"/><path d="M3 5h15v16H3z" fill="#fff6e0"/><path d="M5 9h8M5 12h6M5 15h4" stroke="#c33" stroke-width="1.500"/><path d="M9 18 20 3l2 2-11 14z" fill="#8a4a10"/></svg></button>
    <button class="run" aria-label="帮助"><svg viewBox="0 0 24 24"><path d="M4 10h9v11H4z" fill="#eee"/><path d="M6 13h5M6 15h5M6 18h5" stroke="#555"/><path d="M11 7q0-4 4-4t4 4q0 2-2 3-2 1-2 3M15 16v3" fill="none" stroke="#ffeb00" stroke-width="3"/></svg></button>
    <button class="run act" aria-label="GGJ2013"><svg viewBox="0 0 16 16"><use href="#app"/></svg></button>
    <button class="run" aria-label="360浏览器"><svg viewBox="0 0 24 24"><circle cx="12" cy="12" r="10" fill="#4cc33c"/><path d="M19 13H8q1 4 4 4 3 0 4-1.500h3q-2 4.500-7 4.500-7-1-7-8 1-7 7-7 7 1 7 8zM8 11h7q0-2.500-3.500-3T8 11z" fill="#fff"/><path d="M2 20Q12 18 22 3" stroke="#d8f8c0" fill="none"/></svg></button>
  </div>
  <span class="link">链接</span>
  <span class="two">38%<br>CPU使用</span>
  <div class="tray">
    <svg viewBox="0 0 16 16"><path d="m3 11 5-5 5 5"/></svg>
    <svg viewBox="0 0 16 16"><path d="M5.500 5.500h9v6h-9zM15.500 7v3M1.500 1v3M4.500 1v3M0 4.500h6M3 5v5h2"/><path d="M7 7h6v3H7z" fill="#fff"/></svg>
    <svg viewBox="0 0 16 16"><path d="M2 14A12 12 0 0 1 14 3M5 14a9 9 0 0 1 9-8M8 14a6 6 0 0 1 6-5M11 14q0-2 3-2"/></svg>
    <svg viewBox="0 0 18 16"><path d="M1 6h2.500L7 3v10L3.500 10H1zM9.500 6q1.500 2 0 4M12 4.500q3 3.500 0 7M14.500 3q4 5 0 10"/></svg>
    <svg viewBox="0 0 24 16" class="kb"><path d="M.5 2.500h23v11H.5zM5 11.500h13"/><path d="M3 5.500h18M3 8.500h18" stroke-dasharray="2 1"/></svg>
    <b>中</b>
    <svg viewBox="0 0 28 28" class="so"><use href="#sogou"/></svg>
  </div>
  <span class="two clock">21:55<br>2018/2/1</span>
  <button class="note" aria-label="通知"><svg viewBox="0 0 18 18"><path d="M0 1h17v12h-5v4l-4-4H0z" fill="#fff"/><path d="M3 4.500h11M3 7.500h11M3 10.500h7" stroke="#111"/></svg><b>21</b></button>
</nav>
</body>
</html>
```
FILE: styles.css
```css
* { box-sizing: border-box; }
body {
  margin: 0; height: 100vh; display: flex; flex-direction: column; overflow: hidden;
  background: #f0f0f0; color: #000; cursor: default;
  font: 12px/16px "Open Sans", "Noto Sans CJK SC", sans-serif;
}
button, input, select { font: inherit; color: inherit; margin: 0; padding: 0; border: 0; background: none; border-radius: 0; }
button { white-space: nowrap; }
.defs { position: absolute; width: 0; height: 0; }
.i { width: 16px; height: 16px; flex: none; display: block; }

/* title */
.title { position: relative; flex: none; height: 24px; display: flex; align-items: center; padding-left: 2px; background: #fff; }
.title h1 { margin: 0 0 0 5px; font-size: 12px; font-weight: 400; white-space: nowrap; }
.title h1 span, .menu span { font-size: 13px; }
.winbtns { margin-left: auto; display: flex; }
.winbtns button { width: 46px; height: 20px; display: grid; place-items: center; }
.winbtns svg { width: 12px; height: 12px; fill: none; stroke: #000; }
.badge {
  position: absolute; left: 706px; top: -26px; width: 46px; height: 46px; border-radius: 50%;
  background: #3fba5c; border: 3px solid #b9c4bc; color: #fff; font-weight: 700; text-align: center;
  padding-top: 23px; box-shadow: 0 3px 6px rgba(0,0,0,.3); z-index: 3;
}
.ime {
  position: absolute; left: 1011px; top: 3px; height: 24px; padding: 0 4px 0 20px; display: flex; gap: 6px; align-items: center;
  background: #fff; border: 1px solid #a9c0dc; z-index: 3;
}
.ime svg { width: 16px; height: 16px; }
.ime .logo { position: absolute; left: -13px; top: -3px; width: 28px; height: 27px; }
.ime b { color: #1b73c8; font-size: 15px; line-height: 20px; width: 16px; }
.ime .ln { fill: none; stroke: #1b73c8; stroke-width: 1.5; }

/* menu */
.menu { flex: none; height: 28px; display: flex; align-items: center; padding-left: 2px; }
.menu > button { padding: 0 5px; }
.menu .t { padding: 0 3px; }
.menu .change { margin-left: 5px; }
.tip { flex: 0 0 188px; height: 26px; line-height: 26px; margin: 0 1px 0 2px; text-align: center; background: #f6f6f6; color: #00706c; text-decoration: none; }
.more { align-self: flex-start; margin-left: 14px; padding-right: 2px; font-size: 14px; font-weight: 600; line-height: 14px; }
.menu .more { padding: 0; }
.far { margin-left: 16px; }
.more.end { margin-left: auto; margin-right: 3px; }

/* toolbars */
.strip { flex: none; display: flex; gap: 3px; height: 27px; margin: 2px 0 3px; }
.bar { display: flex; align-items: center; height: 27px; border-radius: 0 3px 3px 0; background: linear-gradient(#fcfcfc, #f4f4f4 60%, #ececec); }
.grow { flex: 1; min-width: 0; }
.t { display: flex; align-items: center; gap: 4px; height: 24px; padding: 0 2px 0 3px; border: 1px solid transparent; flex: none; }
.t:disabled { color: #8f8f8f; }
.t.on { border-color: #0078d7; background: #dcebf7; }
.t.white { background: #fff; }
.sep { width: 1px; height: 22px; margin: 0 1px 0 4px; background: #b4b4b4; flex: none; }
.dd { width: 6px; height: 3px; margin-left: 2px; border: solid transparent; border-width: 3px 3px 0; border-top-color: #000; }
.dd.near { margin-left: -2px; }
.g::before { content: ""; width: 2px; height: 16px; margin: 0 1px 0 3px; flex: none; background: repeating-linear-gradient(#b0b0b0 0 2px, transparent 2px 5px); }
.cb { position: relative; flex: none; width: 69px; height: 24px; margin-left: 3px; background: #fff; }
.cb.s { width: 57px; }
.cb:first-child { margin-left: 2px; }
.cb select { appearance: none; width: 100%; height: 100%; padding: 0 12px 0 2px; outline: 0; }
.cb::after { content: ""; position: absolute; right: 3px; top: 11px; border: solid transparent; border-width: 3px 3px 0; border-top-color: #000; pointer-events: none; }

/* side panel */
.work { flex: 1; min-height: 0; display: flex; }
.side { flex: none; width: 170px; padding-right: 5px; display: flex; flex-direction: column; font-family: "Noto Sans CJK SC", sans-serif; }
.side h2 { margin: 0 0 2px; height: 15px; display: flex; justify-content: space-between; font-size: 12px; font-weight: 400; line-height: 14px; color: #fff; background: #0055e5; }
.side h2 span { display: flex; gap: 9px; padding: 3px 4px 0 0; }
.side h2 svg { width: 9px; height: 9px; fill: none; stroke: #fff; }
.tab { flex: none; height: 22px; border: 1px solid #a0a0a0; border-top-color: #fff; line-height: 18px; }
.fold { flex: none; height: 26px; display: flex; gap: 7px; align-items: center; padding: 3px 0 0 6px; margin-right: 1px; border-left: 1px solid #a0a0a0; border-right: 1px solid #a0a0a0; background: linear-gradient(#fdfdfd, #eee); }
.fold svg { width: 16px; height: 16px; display: block; fill: none; stroke: #10a090; stroke-width: 1; }
.fold .k { stroke: #000; stroke-width: 3; }
.treebox { flex: 1; min-height: 0; margin: 0 1px 0 1px; border: 2px solid #828790; border-width: 2px 1px 1px 2px; background: #fff; display: grid; grid-template: minmax(0, 1fr) 17px / minmax(0, 1fr) 17px; }
.tree { margin: 0; padding: 1px 0 0; list-style: none; overflow: hidden; }
.tree li { display: flex; align-items: center; height: 16px; white-space: nowrap; }
.tree .i { margin-right: 4px; }
.tree b, .status b { font: 10px/16px "DejaVu Sans Mono", monospace; white-space: pre; }
.c { padding-left: 42px;
  background:
    repeating-linear-gradient(#888 0 1px, transparent 1px 2px) 12px 0 / 1px 16px no-repeat,
    repeating-linear-gradient(#888 0 1px, transparent 1px 2px) 31px 0 / 1px 16px no-repeat,
    repeating-linear-gradient(90deg, #888 0 1px, transparent 1px 2px) 31px 8px / 11px 1px no-repeat; }
.c.last { background-size: 1px 16px, 1px 8px, 11px 1px; }
.sel span { display: flex; align-items: center; background: #d9d9d9; padding-right: 5px; }
.p { padding-left: 8px; }
.ex { width: 6px; height: 6px; margin: -3px 8px 0 1px; border: solid #404040; border-width: 0 2px 2px 0; transform: rotate(45deg); flex: none; }
.ex.shut { border-color: #a0a0a0; margin: 0 9px 0 0; transform: rotate(-45deg); }
.tree mark { background: #ffd800; font-weight: 700; }
.vs { display: flex; flex-direction: column; align-items: center; background: #f0f0f0; }
.vs span { width: 15px; height: 209px; background: #cdcdcd; }
.vs i, .hs i { width: 6px; height: 6px; border: solid #505050; border-width: 2px 0 0 2px; transform: rotate(45deg); }
.vs .up { margin: 8px 0 220px; }
.vs .down { margin-top: 12px; transform: rotate(225deg); }
.hs { grid-column: 1 / 3; display: flex; align-items: center; background: #f0f0f0; }
.hs span { width: 102px; height: 15px; background: #cdcdcd; }
.hs .left { margin: 0 5px 0 7px; transform: rotate(-45deg); }
.hs .right { margin-left: 9px; transform: rotate(135deg); }

/* stage */
.stage { flex: 1; min-width: 0; display: flex; flex-direction: column; }
.row { flex: none; display: flex; gap: 3px; height: 28px; }
.row .bar { height: 26px; }
.low { align-items: flex-end; padding-bottom: 1px; }
.stub { flex: 0 0 33px; }
.view { flex: 1; min-height: 0; width: 100%; display: block; background: #000; }
.num { fill: #c0c0c0; font: 700 14px "Liberation Sans", sans-serif; text-anchor: middle; }
.dimt { fill: #b8b4ae; font: 14px "Open Sans", sans-serif; }
.foot { height: 29px; padding-top: 1px; }
.off { color: #7a7a7a; font-size: 13px; }
.off .cb { color: #000; font-size: 12px; }
.spin { position: relative; width: 58px; height: 22px; margin: 0 1px 0 3px; border: 1px solid #7a7a7a; display: flex; }
.spin.w { width: 68px; margin-left: 4px; }
.spin input { width: 100%; padding-right: 18px; text-align: right; outline: 0; }
.spin i { position: absolute; right: 4px; top: 4px; border: solid transparent; border-width: 0 3px 4px; border-bottom-color: #606060; }
.spin .d { top: 14px; border-width: 4px 3px 0; border-top-color: #606060; }
.off .y { margin-left: 4px; }
.off label[for=ox] { margin-left: 1px; }
.off input[type=checkbox] { appearance: none; width: 11px; height: 11px; margin: 0 8px 0 2px; border: 1px solid #999; }
.off .rot { color: #000; font-size: 12px; }

/* status */
.status { flex: none; height: 24px; padding-top: 3px; display: flex; gap: 2px; font-family: "Noto Sans CJK SC", sans-serif; }
.status span { height: 20px; border: 1px solid #d4d4d4; display: flex; align-items: center; padding-left: 1px; background: linear-gradient(#f2f2f2, #fff); overflow: hidden; flex: none; }
.status .c1 { width: 148px; } .status .c2 { width: 78px; } .status .c3 { width: 98px; } .status .c4 { width: 48px; }
.status .c5 { flex: 1; } .status .c6 { width: 70px; }

/* taskbar */
.task { flex: none; height: 40px; display: flex; align-items: center; background: #030c10; color: #e8e8e8; }
.start { width: 48px; height: 40px; background: #000; display: grid; place-items: center; }
.start svg { width: 16px; height: 16px; }
.search { width: 344px; height: 40px; display: flex; align-items: center; padding: 0 14px 0 8px; background: #333; color: #a0a0a0; }
.search svg { width: 22px; height: 22px; flex: none; }
.search input { flex: 1; min-width: 0; padding-left: 5px; font-size: 14px; outline: 0; }
.search input::placeholder { color: #9a9a9a; opacity: 1; }
.search .mic { width: 12px; height: 16px; }
.apps { display: flex; }
.apps button { width: 48px; height: 40px; display: grid; place-items: center; }
.apps svg { width: 24px; height: 24px; display: block; }
.wide button { width: 51px; }
.mid button { width: 42px; }
.mid .run { background: linear-gradient(#76b9ed, #76b9ed) 50% 100% / 34px 2px no-repeat; }
.mid .act { background-color: #394246; background-size: 42px 2px; }
.link { margin-left: 12px; }
.two { margin-left: 18px; text-align: center; line-height: 17px; white-space: nowrap; }
.tray { display: flex; align-items: center; gap: 8px; margin-left: 17px; }
.tray svg { width: 16px; height: 16px; fill: none; stroke: #f0f0f0; }
.tray .kb { width: 24px; margin-left: 2px; }
.tray .so { stroke: none; margin-left: 5px; }
.tray b { font-weight: 500; font-size: 13px; }
.clock { margin-left: 20px; }
.note { position: relative; margin-left: auto; width: 42px; height: 40px; border-right: 1px solid #555; margin-right: 4px; }
.note svg { position: absolute; left: 6px; top: 11px; width: 18px; height: 18px; }
.note b { position: absolute; left: 10px; top: 19px; width: 22px; height: 16px; border-radius: 8px; border: 1px solid #888; background: #333; color: #fff; line-height: 14px; }
```
